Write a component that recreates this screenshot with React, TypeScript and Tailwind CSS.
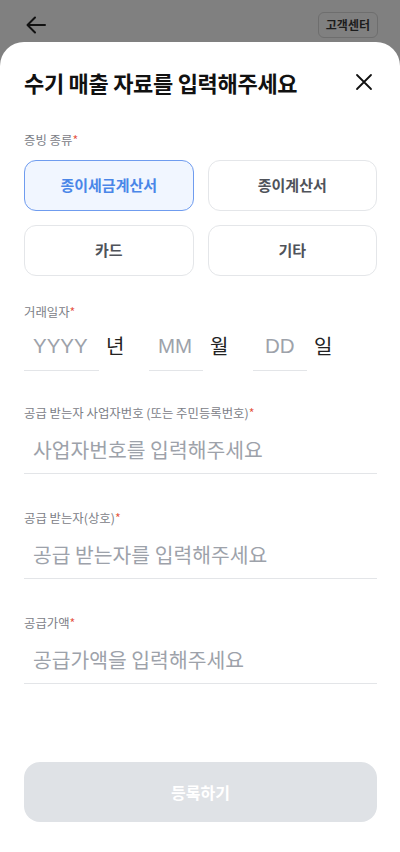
import { useState } from "react"

const font = { fontFamily: '"Noto Sans CJK KR", "Noto Sans", sans-serif' }
const latin = { fontFamily: '"Liberation Sans", "Noto Sans CJK KR", sans-serif' }

const TYPES = ["종이세금계산서", "종이계산서", "카드", "기타"]

function Label({ text }: { text: string }) {
  return (
    <div className="text-[12.4px] leading-4 text-[#7c8087]">
      {text}
      <span className="text-[#e5533d]">*</span>
    </div>
  )
}

function TextField({ label, placeholder }: { label: string; placeholder: string }) {
  return (
    <div className="flex flex-col">
      <Label text={label} />
      <input
        placeholder={placeholder}
        className="mt-[10px] h-[43px] pb-[6px] border-b border-[#e3e5e8] pl-[9px] text-[20.4px] text-[#222] outline-none placeholder:text-[#9da2aa]"
        style={font}
      />
    </div>
  )
}

function DatePart({ ph, unit, w, pl }: { ph: string; unit: string; w: string; pl: string }) {
  return (
    <div className="flex items-start">
      <input
        placeholder={ph}
        className={`${w} ${pl} h-[44px] pb-[6px] border-b border-[#e3e5e8] text-[20.5px] outline-none placeholder:text-[#9da2aa]`}
        style={latin}
      />
      <span className="ml-[7px] w-[43px] h-[38px] flex items-center text-[20px] text-[#222]">{unit}</span>
    </div>
  )
}

export default function App() {
  const [type, setType] = useState(TYPES[0])

  return (
    <div className="min-h-[852px] w-[400px] bg-[#808080] flex flex-col" style={font}>
      <div className="h-[42px] flex items-start justify-between pl-[24px] pr-[22px] pt-[12px]">
        <svg width="24" height="24" viewBox="0 0 24 24" fill="none" stroke="#111" strokeWidth="2" strokeLinecap="round" strokeLinejoin="round" className="mt-[1px]">
          <path d="M21 12H4M11 4.5 3.5 12l7.5 7.5" />
        </svg>
        <div className="h-[26px] px-[7px] rounded-[6px] border border-[#6e6e6e] text-[12px] font-bold text-[#1c1c1c] flex items-center">
          고객센터
        </div>
      </div>

      <div className="flex-1 bg-white rounded-t-[24px] pl-[24px] pr-[23px] pt-[24px] pb-[30px] flex flex-col">
        <div className="flex items-center justify-between h-[32px]">
          <h1 className="text-[22px] font-bold text-[#111] tracking-[-0.3px]">수기 매출 자료를 입력해주세요</h1>
          <svg width="20" height="20" viewBox="0 0 20 20" fill="none" stroke="#111" strokeWidth="1.8" strokeLinecap="round" className="mr-[3px]">
            <path d="M3 3l14 14M17 3 3 17" />
          </svg>
        </div>

        <div className="mt-[34px]">
          <Label text="증빙 종류" />
        </div>
        <div className="mt-[12px] grid grid-cols-2 gap-x-[14px] gap-y-[14px]">
          {TYPES.map((t) => {
            const on = t === type
            return (
              <button
                key={t}
                onClick={() => setType(t)}
                className={
                  on
                    ? "h-[51px] rounded-[12px] border border-[#6f9cef] bg-[#f1f6ff] text-[15px] font-bold text-[#4a86e8]"
                    : "h-[51px] rounded-[12px] border border-[#e4e6e9] bg-white text-[15px] font-bold text-[#4f535a]"
                }
              >
                {t}
              </button>
            )
          })}
        </div>

        <div className="mt-[28px]">
          <Label text="거래일자" />
        </div>
        <div className="mt-[7px] flex items-start">
          <DatePart ph="YYYY" unit="년" w="w-[75px]" pl="pl-[9px]" />
          <DatePart ph="MM" unit="월" w="w-[54px]" pl="pl-[9px]" />
          <DatePart ph="DD" unit="일" w="w-[54px]" pl="pl-[12px]" />
        </div>

        <div className="mt-[34px] flex flex-col gap-[36px]">
          <TextField label="공급 받는자 사업자번호 (또는 주민등록번호)" placeholder="사업자번호를 입력해주세요" />
          <TextField label="공급 받는자(상호)" placeholder="공급 받는자를 입력해주세요" />
          <TextField label="공급가액" placeholder="공급가액을 입력해주세요" />
        </div>

        <div className="flex-1" />
        <button className="h-[60px] rounded-[16px] bg-[#dfe2e6] text-[16px] font-bold text-white">등록하기</button>
      </div>
    </div>
  )
}
